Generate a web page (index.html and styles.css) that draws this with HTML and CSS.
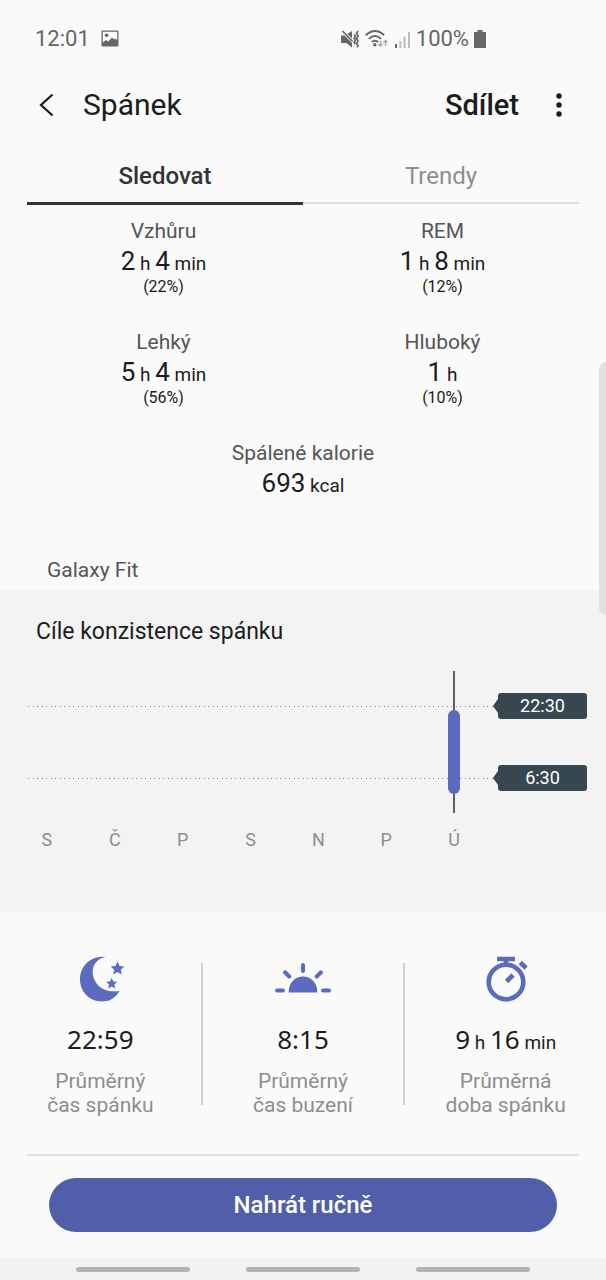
FILE: index.html
```html
<!DOCTYPE html>
<html lang="cs">
<head>
<meta charset="utf-8">
<meta name="viewport" content="width=device-width, initial-scale=1">
<title>Spánek</title>
<link rel="stylesheet" href="styles.css">
</head>
<body>
<div class="status">
  <div class="status-group">
    <span>12:01</span>
    <svg width="18" height="18" viewBox="0 0 18 18" fill="#666" aria-hidden="true"><path fill-rule="evenodd" d="M1.500 0.500h15a1 1 0 0 1 1 1v14a1 1 0 0 1-1 1h-15a1 1 0 0 1-1-1v-14a1 1 0 0 1 1-1zM1.800 1.800v10.700l3.200-2.500 2.200 1.600 3.800-4 2.200 2 1.500-1 1.500 1.800V1.800z"/><circle cx="5.600" cy="5.300" r="1.800"/></svg>
  </div>
  <div class="status-group status-right">
    <svg width="19" height="18" viewBox="0 0 19 18" aria-hidden="true"><path fill="#666" d="M0 5.500h3.500L11 13v4.500L5.500 13H0zM6.500 4L11 1v7.500z"/><path d="M1.500 1l10 10.500" stroke="#666" stroke-width="1.600"/><path d="M13.200 4.500l1 1.800-1 2 1 2-1 2 1 1.800M17 1l-1.600 2.400 1.700 2.500-1.700 2.500 1.700 2.500-1.700 2.500 1.700 2.300-1 1.500" fill="none" stroke="#666" stroke-width="1.700"/></svg>
    <svg width="24" height="18" viewBox="0 0 24 18" fill="none" aria-hidden="true"><g stroke="#666" stroke-width="1.900"><path d="M.8 5.200q9.200-8.400 18.400 0M3.800 8.800q6.200-5.400 12.400 0M6.800 12q3.200-2.600 6.400 0"/></g><circle cx="9.800" cy="14.800" r="1.700" fill="#666"/><path d="M15.500 10.500v5.500M13.500 14l2 2 2-2M20.500 16v-5.500M18.500 12.500l2-2 2 2" stroke="#aaa" stroke-width="1.400"/></svg>
    <svg width="17" height="17" viewBox="0 0 17 17" aria-hidden="true"><path fill="#666" d="M1 13h2v4H1z"/><path fill="#bbb" d="M5.300 10h2v7h-2zM9.600 5.500h2V17h-2zM14 1h2v16h-2z"/></svg>
    <span>100%</span>
    <svg width="12" height="18" viewBox="0 0 12 18" fill="#666" aria-hidden="true"><path d="M3.500 0h5v2H11a1 1 0 0 1 1 1v14a1 1 0 0 1-1 1H1a1 1 0 0 1-1-1V3a1 1 0 0 1 1-1h2.500z"/></svg>
  </div>
</div>

<header class="appbar">
  <button class="icon-button back" aria-label="Zpět"><svg width="16" height="24" viewBox="0 0 16 24" fill="none" stroke="#1c1c1c" stroke-width="2.200"><path d="M14.500 1.500L3 12l11.500 10.500"/></svg></button>
  <h1>Spánek</h1>
  <button class="share">Sdílet</button>
  <button class="icon-button" aria-label="Další možnosti"><svg width="6" height="24" viewBox="0 0 6 24" fill="#1c1c1c"><circle cx="3" cy="3" r="2.700"/><circle cx="3" cy="12" r="2.700"/><circle cx="3" cy="21" r="2.700"/></svg></button>
</header>

<nav class="tabs">
  <button class="tab tab-active" aria-current="page">Sledovat</button>
  <button class="tab">Trendy</button>
</nav>

<main>
  <section class="phases">
    <div class="phase"><span class="label">Vzhůru</span><span class="value">2<small> h </small>4<small> min</small></span><span class="percent">(22%)</span></div>
    <div class="phase"><span class="label">REM</span><span class="value">1<small> h </small>8<small> min</small></span><span class="percent">(12%)</span></div>
    <div class="phase"><span class="label">Lehký</span><span class="value">5<small> h </small>4<small> min</small></span><span class="percent">(56%)</span></div>
    <div class="phase"><span class="label">Hluboký</span><span class="value">1<small> h</small></span><span class="percent">(10%)</span></div>
    <div class="phase phase-wide"><span class="label">Spálené kalorie</span><span class="value">693<small> kcal</small></span></div>
  </section>
  <p class="source">Galaxy Fit</p>

  <section class="consistency">
    <h2>Cíle konzistence spánku</h2>
    <div class="plot">
      <div class="goals">
        <div class="goal"><i class="dots"></i><span class="tag">22:30</span></div>
        <div class="goal"><i class="dots"></i><span class="tag">6:30</span></div>
      </div>
      <div class="days">
        <div class="range"><i class="bar"></i></div>
      </div>
    </div>
    <div class="days day-names"><span>S</span><span>Č</span><span>P</span><span>S</span><span>N</span><span>P</span><span>Ú</span></div>
  </section>

  <section class="averages">
    <div class="average">
      <svg width="50" height="46" viewBox="-4 0 50 46" fill="#5c6bc0" aria-hidden="true"><path d="M26.500 1C14 3.500 11.500 15 15.500 24c4.500 9.500 14 12.500 25 11-4 7.500-10.500 10.500-17.500 10.500C10 45.500 1 35.500 1 23.300 1 10 12-.5 26.500 1z"/><path d="M38.500 5.500l2 4.400 4.900.5-3.700 3.300 1.100 4.800-4.300-2.500-4.300 2.500 1.100-4.800-3.700-3.300 4.900-.5zM32.700 21.800l1.600 3.600 4 .4-3 2.700.9 3.900-3.500-2-3.500 2 .9-3.900-3-2.700 4-.4z"/></svg>
      <strong>22:59</strong>
      <span class="caption">Průměrný<br>čas spánku</span>
    </div>
    <i class="separator"></i>
    <div class="average">
      <svg width="56" height="46" viewBox="0 0 56 46" aria-hidden="true"><path fill="#5c6bc0" d="M13.800 36.500v-1.800a14.200 14.200 0 0 1 28.400 0v1.800z"/><path d="M28 9v6M10 16.300l4.300 4.200M46 16.300l-4.300 4.200M2 34.600h6M48 34.600h6" stroke="#5c6bc0" stroke-width="4" stroke-linecap="round"/></svg>
      <strong>8:15</strong>
      <span class="caption">Průměrný<br>čas buzení</span>
    </div>
    <i class="separator"></i>
    <div class="average">
      <svg width="42" height="46" viewBox="-1 0 42 46" fill="none" stroke="#5c6bc0" aria-hidden="true"><circle cx="20" cy="26" r="17.300" stroke-width="4.600"/><path d="M11 3h18M20 3v6" stroke-width="4.600"/><path d="M34.200 6.500l6 5.500M20.500 25.500l6.500-6.500" stroke-width="4.600"/></svg>
      <strong>9<small> h </small>16<small> min</small></strong>
      <span class="caption">Průměrná<br>doba spánku</span>
    </div>
  </section>
  <div class="record"><button class="record-button">Nahrát ručně</button></div>
</main>

<footer class="gestures"><i></i><i></i><i></i></footer>
<div class="edge-handle"></div>
</body>
</html>
```

FILE: styles.css
```css
* { box-sizing: border-box; }

body {
  position: relative;
  display: flex;
  flex-direction: column;
  min-height: 100vh;
  margin: 0;
  overflow-x: hidden;
  background: #fafafa;
  color: #1c1c1c;
  font-family: Roboto, "Noto Sans", sans-serif;
}

h1, h2, p { margin: 0; }

svg {
  display: block;
  overflow: visible;
}

small { line-height: 1; }

button {
  padding: 0;
  border: 0;
  background: none;
  color: inherit;
  font: inherit;
}

.status {
  display: flex;
  justify-content: space-between;
  padding: 25px 120px 0 35px;
  color: #666;
  font-size: 22px;
  line-height: 28px;
}

.status-group {
  display: flex;
  align-items: center;
  gap: 11px;
}

.status-right { gap: 5px; }

.appbar {
  display: flex;
  align-items: center;
  padding: 31px 33px 24px 24px;
}

.icon-button {
  display: flex;
  justify-content: center;
  width: 28px;
}

.back { width: 44px; }

h1 {
  flex: 1;
  padding-left: 15px;
  font-size: 30px;
  font-weight: 400;
  line-height: 42px;
}

.share {
  margin-right: 26px;
  font-size: 29px;
  font-weight: 500;
  line-height: 42px;
}

.tabs {
  display: flex;
  align-items: flex-start;
  padding: 0 27px;
}

.tab {
  flex: 1;
  height: 54px;
  border-bottom: 2px solid #dedede;
  color: #8e8e8e;
  font-size: 24px;
  line-height: 50px;
}

.tab-active {
  height: 55px;
  border-bottom: 3px solid #333;
  color: #333;
  font-weight: 500;
}

.phases {
  display: grid;
  grid-template-columns: 1fr 1fr;
  row-gap: 31px;
  padding: 12px 24px 0;
}

.phase {
  display: flex;
  flex-direction: column;
  align-items: center;
}

.phase-wide { grid-column: 1 / 3; }

.label {
  color: #555;
  font-size: 21px;
  line-height: 28px;
}

.value {
  font-size: 26px;
  line-height: 32px;
}

.value small { font-size: 19px; }

.percent {
  font-size: 16px;
  line-height: 20px;
}

.source {
  padding: 57px 47px 6px;
  color: #555;
  font-size: 21px;
  line-height: 28px;
}

.consistency {
  padding: 26px 0 58px;
  background: #f3f3f3;
}

h2 {
  padding: 0 36px;
  font-size: 23px;
  font-weight: 400;
  line-height: 32px;
}

.plot {
  display: grid;
  padding-top: 23px;
}

.plot > * { grid-area: 1 / 1; }

.goals {
  display: flex;
  flex-direction: column;
  gap: 46px;
  padding: 22px 19px 0 28px;
}

.goal {
  display: flex;
  align-items: center;
}

.dots {
  flex: 1;
  height: 1px;
  background: repeating-linear-gradient(90deg, #888 0 1px, transparent 1px 5px, #888 5px 6px, transparent 6px 9px);
}

.tag {
  position: relative;
  width: 89px;
  margin-left: 5px;
  border-radius: 3px;
  background: #37474f;
  color: #fff;
  font-size: 18px;
  line-height: 26px;
  text-align: center;
}

.tag::before {
  position: absolute;
  top: 6px;
  right: 100%;
  width: 5px;
  height: 14px;
  background: #37474f;
  clip-path: polygon(100% 0, 100% 100%, 0 50%);
  content: "";
}

.days {
  display: grid;
  grid-template-columns: repeat(7, 1fr);
  padding: 0 118px 0 13px;
}

.range {
  display: flex;
  flex-direction: column;
  grid-column: 7;
  align-items: center;
  height: 142px;
  padding-top: 39px;
  background: linear-gradient(#546269, #546269) center / 2px 100% no-repeat;
}

.bar {
  width: 12px;
  height: 84px;
  border-radius: 6px;
  background: #5c6bc0;
}

.day-names {
  padding-top: 13px;
  color: #8e8e8e;
  font-size: 18px;
  line-height: 28px;
  text-align: center;
}

.averages {
  display: grid;
  grid-template-columns: 1fr 2px 1fr 2px 1fr;
  padding: 44px 0 37px;
}

.separator {
  margin: 7px 0 12px;
  background: #d0d0d0;
}

.average {
  display: flex;
  flex-direction: column;
  align-items: center;
}

.average strong {
  padding-top: 19px;
  font-family: "Noto Sans", Roboto, sans-serif;
  font-size: 26px;
  font-weight: 400;
  line-height: 36px;
}

.average small {
  font-family: Roboto, "Noto Sans", sans-serif;
  font-size: 19px;
}

.caption {
  padding-top: 12px;
  color: #8e8e8e;
  font-size: 21px;
  line-height: 24px;
  text-align: center;
}

.record {
  margin: 0 27px;
  padding: 22px 22px 26px;
  border-top: 2px solid #e2e2e2;
}

.record-button {
  display: block;
  width: 100%;
  height: 54px;
  border-radius: 27px;
  background: #515fab;
  color: #fff;
  font-size: 24px;
  font-weight: 500;
}

.gestures {
  display: flex;
  flex: 1;
  align-items: center;
  justify-content: center;
  gap: 56px;
  min-height: 22px;
  background: #f2f2f2;
}

.gestures i {
  width: 114px;
  height: 5px;
  border-radius: 3px;
  background: #b3b3b3;
}

.edge-handle {
  position: absolute;
  top: 362px;
  right: 0;
  width: 7px;
  height: 253px;
  border-radius: 7px 0 0 7px;
  background: #e1e1e0;
}
```
